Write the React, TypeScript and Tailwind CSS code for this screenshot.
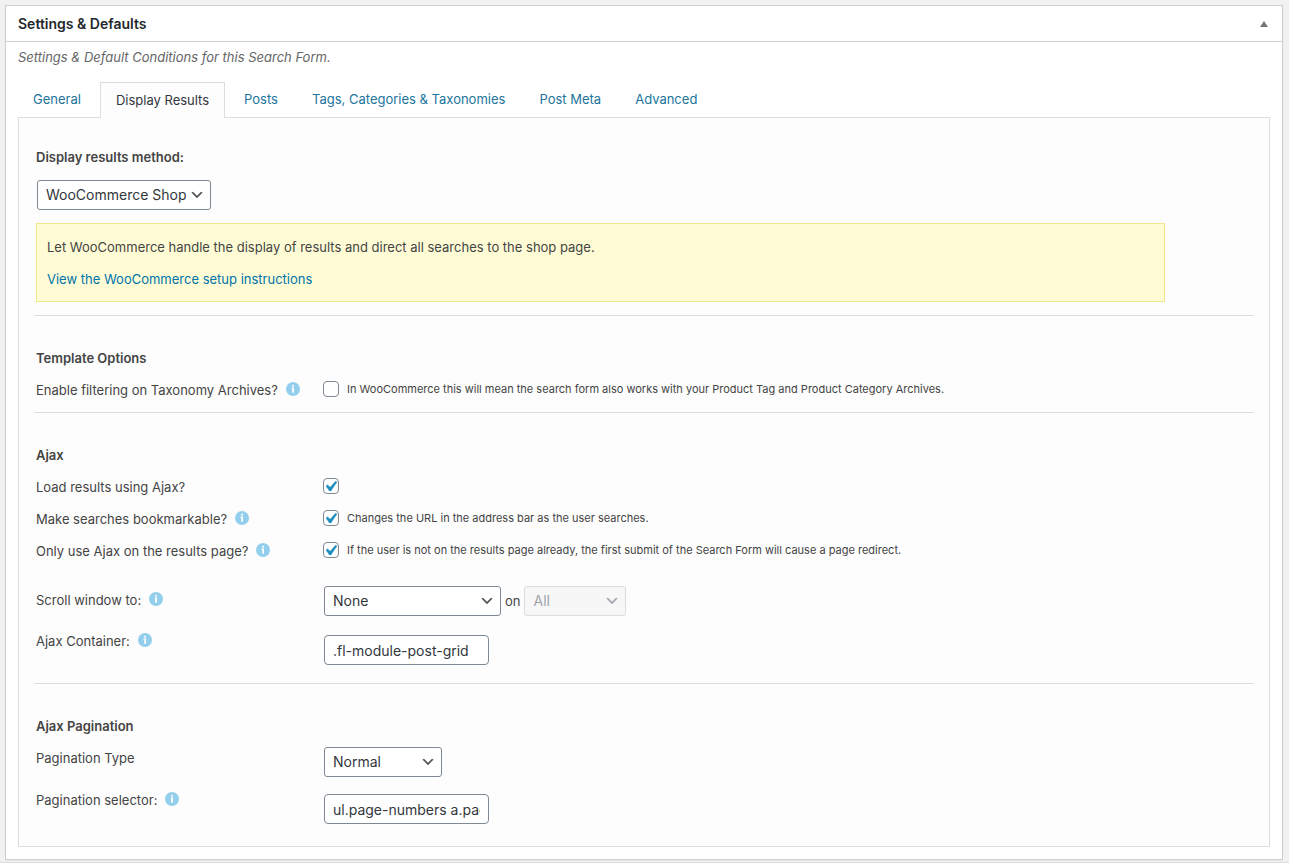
import { useState, type ComponentProps, type ReactNode } from "react";
import { clsx } from "clsx";

const TABS = [
  "General",
  "Display Results",
  "Posts",
  "Tags, Categories & Taxonomies",
  "Post Meta",
  "Advanced",
];

function InfoIcon() {
  return (
    <svg viewBox="0 0 14 14" className="-mt-0.5 h-3.5 w-3.5 shrink-0" aria-hidden="true">
      <circle cx="7" cy="7" r="7" fill="#93cfec" />
      <rect x="6.2" y="2.8" width="1.8" height="1.8" fill="#fff" />
      <path d="M5.4 5.6H8v5.2H6.2V6.5h-.8z" fill="#fff" />
    </svg>
  );
}

function Select({ className, children, ...props }: ComponentProps<"select">) {
  return (
    <span className={clsx("relative inline-block h-[30px]", className)}>
      <select
        className="h-full w-full appearance-none rounded-[3px] border border-[#7e8993] bg-white pr-6 pl-2 text-sm text-[#32373c] disabled:border-[#dddddd] disabled:bg-[#f7f7f7] disabled:text-[#a0a5aa] disabled:opacity-100"
        {...props}
      >
        {children}
      </select>
      <svg
        viewBox="0 0 20 20"
        className={clsx(
          "pointer-events-none absolute top-[7px] right-1.5 h-4 w-4",
          props.disabled ? "fill-[#a0a5aa]" : "fill-[#555555]"
        )}
        aria-hidden="true"
      >
        <path d="M5 6l5 5 5-5 2 1-7 7-7-7 2-1z" />
      </svg>
    </span>
  );
}

function TextInput(props: ComponentProps<"input">) {
  return (
    <input
      type="text"
      className="ml-px h-[30px] w-[165px] rounded border border-[#7e8993] bg-white px-2 text-sm text-[#32373c]"
      {...props}
    />
  );
}

function Checkbox(props: ComponentProps<"input">) {
  return (
    <span className="relative h-4 w-4 shrink-0">
      <input
        type="checkbox"
        className="peer block h-4 w-4 appearance-none rounded border border-[#7e8993] bg-white"
        {...props}
      />
      <svg
        viewBox="0 0 20 20"
        className="pointer-events-none absolute -top-0.5 -left-[3px] hidden h-[21px] w-[21px] fill-[#1e8cbe] stroke-[#1e8cbe] stroke-[0.4] peer-checked:block"
        aria-hidden="true"
      >
        <path d="M14.83 4.89l1.34.94-5.81 8.38H9.02L5.78 9.67l1.34-1.25 2.57 2.4z" />
      </svg>
    </span>
  );
}

function Section({ title, className, children }: { title: string; className?: string; children: ReactNode }) {
  return (
    <section className={clsx("border-t border-[#dddddd] pt-[26px]", className)}>
      <h3 className="px-0.5 leading-8 font-semibold">{title}</h3>
      {children}
    </section>
  );
}

interface RowProps {
  id: string;
  label: string;
  info?: boolean;
  className?: string;
  children: ReactNode;
}

function Row({ id, label, info, className, children }: RowProps) {
  return (
    <div className={clsx("flex items-start px-0.5", className)}>
      <div className="flex w-[287px] shrink-0 items-center gap-2">
        <label htmlFor={id} className="leading-8">
          {label}
        </label>
        {info && <InfoIcon />}
      </div>
      {children}
    </div>
  );
}

function CheckRow({ hint, defaultChecked, ...row }: Omit<RowProps, "children"> & { hint?: string; defaultChecked?: boolean }) {
  return (
    <Row {...row}>
      <div className="flex h-[30px] items-center gap-2">
        <Checkbox id={row.id} defaultChecked={defaultChecked} />
        {hint && <span className="text-[11px]">{hint}</span>}
      </div>
    </Row>
  );
}

export default function App() {
  const [tab, setTab] = useState("Display Results");

  return (
    <div className="border-b border-[#dddddd] bg-[#f1f1f1] pt-[5px] pr-1.5 pb-0.5 pl-[5px] font-[Inter,sans-serif] text-[13px] leading-5 text-[#444444]">
      <div className="border border-[#ccd0d4] bg-white shadow-[0_1px_1px_rgba(0,0,0,0.04)]">
        <header className="flex h-9 items-center justify-between border-b border-[#ccd0d4] pr-3 pl-3">
          <h2 className="text-sm font-semibold text-[#23282d]">Settings &amp; Defaults</h2>
          <button type="button" aria-label="Toggle panel" className="flex h-6 w-3 items-center justify-center">
            <svg viewBox="0 0 8 6" className="h-1.5 w-2 fill-[#72777c]" aria-hidden="true">
              <path d="M4 0l4 6H0z" />
            </svg>
          </button>
        </header>

        <div className="px-3 pt-[5px] pb-3">
          <p className="text-[#666666] italic">Settings &amp; Default Conditions for this Search Form.</p>

          <nav className="mt-[15px] flex h-9 gap-1">
            {TABS.map((name) => (
              <a
                key={name}
                href="#"
                onClick={(e) => {
                  e.preventDefault();
                  setTab(name);
                }}
                className={clsx(
                  "px-[15px] leading-[35px]",
                  name === tab
                    ? "z-10 border border-b-0 border-[#dddddd] bg-[#fdfdfd] text-[#32373c]"
                    : "text-[#21759b]"
                )}
              >
                {name}
              </a>
            ))}
          </nav>

          <div className="-mt-px border border-[#dddddd] bg-[#fdfdfd] px-[15px] pb-[22px]">
            <div className="px-0.5 pt-[23px] pb-[13px]">
              <label htmlFor="method" className="block leading-8 font-semibold">
                Display results method:
              </label>
              <Select id="method" className="mt-[7px] ml-px w-[174px]">
                <option>WooCommerce Shop</option>
              </Select>
              <div className="mt-[13px] mr-[87px] border border-[#f0e68c] bg-[#fffcd5] px-2.5 pt-[7px] pb-1.5 leading-8">
                <p>Let WooCommerce handle the display of results and direct all searches to the shop page.</p>
                <a href="#" className="text-[#0073aa]">
                  View the WooCommerce setup instructions
                </a>
              </div>
            </div>

            <Section title="Template Options" className="pb-1.5">
              <CheckRow
                id="taxonomy-archives"
                label="Enable filtering on Taxonomy Archives?"
                info
                hint="In WooCommerce this will mean the search form also works with your Product Tag and Product Category Archives."
              />
            </Section>

            <Section title="Ajax" className="pb-[18px]">
              <CheckRow id="use-ajax" label="Load results using Ajax?" defaultChecked />
              <CheckRow
                id="bookmarkable"
                label="Make searches bookmarkable?"
                info
                hint="Changes the URL in the address bar as the user searches."
                defaultChecked
              />
              <CheckRow
                id="only-results"
                label="Only use Ajax on the results page?"
                info
                hint="If the user is not on the results page already, the first submit of the Search Form will cause a page redirect."
                defaultChecked
              />
              <Row id="scroll-to" label="Scroll window to:" info className="mt-[17px]">
                <div className="mt-0.5 flex items-center gap-1">
                  <Select id="scroll-to" className="ml-px w-[177px]">
                    <option>None</option>
                  </Select>
                  <label htmlFor="scroll-on">on</label>
                  <Select id="scroll-on" className="w-[102px]" disabled>
                    <option>All</option>
                  </Select>
                </div>
              </Row>
              <Row id="container" label="Ajax Container:" info className="mt-[9px]">
                <div className="mt-[10px] flex">
                  <TextInput id="container" defaultValue=".fl-module-post-grid" />
                </div>
              </Row>
            </Section>

            <Section title="Ajax Pagination">
              <Row id="pagination-type" label="Pagination Type">
                <div className="mt-[5px] flex">
                  <Select id="pagination-type" className="ml-px w-[118px]">
                    <option>Normal</option>
                  </Select>
                </div>
              </Row>
              <Row id="pagination-selector" label="Pagination selector:" info className="mt-[7px]">
                <div className="mt-[10px] flex">
                  <TextInput id="pagination-selector" defaultValue="ul.page-numbers a.page-numbers" />
                </div>
              </Row>
            </Section>
          </div>
        </div>
      </div>
    </div>
  );
}
